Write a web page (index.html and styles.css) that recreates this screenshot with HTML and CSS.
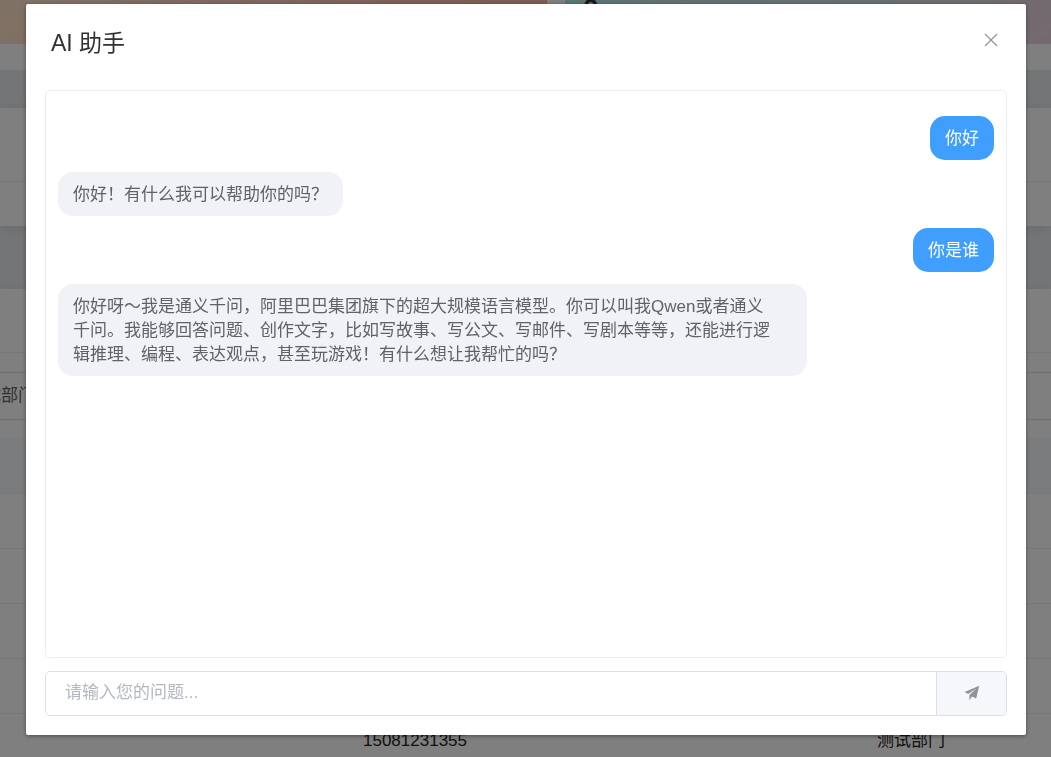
FILE: index.html
```
<!DOCTYPE html>
<html lang="zh-CN">
<head>
  <meta charset="UTF-8">
  <meta name="viewport" content="width=device-width, initial-scale=1.0">
  <title>AI 助手</title>
  <link rel="stylesheet" href="styles.css">
</head>
<body>
  <!-- page behind the dialog -->
  <main class="page">
    <section class="stats">
      <div class="stat stat-warm"></div>
      <div class="stat stat-cool"><strong>0</strong></div>
    </section>
    <section class="panel filter">
      <div class="filter-title"></div>
      <div class="filter-body"></div>
    </section>
    <section class="panel list">
      <div class="list-title"></div>
      <div class="dept"><span>测试部门</span></div>
      <table>
        <thead>
          <tr><th></th><th></th><th></th></tr>
        </thead>
        <tbody>
          <tr><td></td><td></td><td></td></tr>
          <tr><td></td><td></td><td></td></tr>
          <tr><td></td><td></td><td></td></tr>
          <tr><td></td><td></td><td></td></tr>
          <tr><td></td><td>15081231355</td><td>测试部门</td></tr>
        </tbody>
      </table>
    </section>
  </main>

  <div class="overlay">
    <div class="dialog" role="dialog" aria-labelledby="dialogTitle">
      <header class="dialog-header">
        <h1 id="dialogTitle">AI 助手</h1>
        <button class="close" type="button" aria-label="关闭">
          <svg viewBox="0 0 14 14" width="14" height="14"><path d="M1 1L13 13M13 1L1 13" fill="none" stroke="currentColor" stroke-width="1.2"/></svg>
        </button>
      </header>
      <div class="chat">
        <div class="message user">你好</div>
        <div class="message">你好！有什么我可以帮助你的吗？</div>
        <div class="message user">你是谁</div>
        <div class="message long">你好呀～我是通义千问，阿里巴巴集团旗下的超大规模语言模型。你可以叫我Qwen或者通义<br>千问。我能够回答问题、创作文字，比如写故事、写公文、写邮件、写剧本等等，还能进行逻<br>辑推理、编程、表达观点，甚至玩游戏！有什么想让我帮忙的吗？</div>
      </div>
      <form class="ask">
        <input type="text" placeholder="请输入您的问题..." aria-label="问题">
        <button type="button" aria-label="发送">
          <svg viewBox="0 0 16 16" width="16" height="16"><path d="M15.2 .8L.6 7.1L4.2 9.1L12.6 3.3L5.4 10V15.2L8 11.6L12.2 13.6Z" fill="currentColor"/></svg>
        </button>
      </form>
    </div>
  </div>
</body>
</html>
```
FILE: styles.css
```
* {
  box-sizing: border-box;
}
html, body {
  height: 100%;
}
body {
  margin: 0;
  overflow: hidden;
  background: #e9ebef;
  color: #303133;
  font-family: "Liberation Sans", "Noto Sans CJK SC", sans-serif;
  font-size: 17px;
  line-height: 24px;
}

/* page behind */
.page {
  display: flow-root;
}
.stats {
  display: grid;
  grid-template-columns: 547px 1fr;
  gap: 18px;
  margin-top: -100px;
  padding-bottom: 26px;
  background: #fff;
}
.stat {
  height: 144px;
  padding: 97px 18px 0;
}
.stat-warm {
  background: linear-gradient(135deg, #ffecd2, #fcb69f);
}
.stat-cool {
  background: linear-gradient(135deg, #a8edea, #ead3df);
}
.stat strong {
  font-size: 28px;
}
.panel {
  background: #fff;
  box-shadow: 0 2px 12px rgba(0, 0, 0, 0.1);
}
.filter {
  margin: 38px 0 63px;
}
.filter-title {
  height: 74px;
  border-bottom: 1px solid #ebeef5;
}
.filter-body {
  height: 44px;
}
.list-title {
  height: 64px;
  border-bottom: 1px solid #ebeef5;
}
.dept {
  height: 48px;
  margin-top: 19px;
  border: solid #dcdfe6;
  border-width: 1px 0;
  color: #606266;
  line-height: 46px;
}
.dept span {
  margin-left: -33px;
}
table {
  width: 100%;
  margin-top: 18px;
  border-collapse: collapse;
  table-layout: fixed;
}
th, td {
  height: 55px;
  padding: 0;
  border-bottom: 1px solid #ebeef5;
  color: #222;
  text-align: left;
}
th {
  background: #f5f7fa;
}
th:first-child {
  width: 363px;
}
th:last-child {
  width: 174px;
}

/* dialog */
.overlay {
  position: fixed;
  inset: 0;
  padding: 4px 25px 0 26px;
  background: rgba(0, 0, 0, 0.5);
}
.dialog {
  padding: 0 19px 19px;
  border-radius: 2px;
  background: #fff;
  box-shadow: 0 1px 4px rgba(0, 0, 0, 0.4);
}
.dialog-header {
  display: flex;
  justify-content: space-between;
  padding: 24px 9px 32px 6px;
}
h1 {
  margin: 0;
  font-size: 23px;
  font-weight: 400;
  line-height: 30px;
}
.close {
  height: 24px;
  padding: 0;
  border: 0;
  background: none;
  color: #909399;
}
.close svg, .ask svg {
  display: block;
}
.chat {
  display: flex;
  flex-direction: column;
  align-items: flex-start;
  gap: 12px;
  height: 75vh;
  padding: 25px 12px;
  overflow-y: auto;
  border: 1px solid #ebeef5;
  border-radius: 5px;
}
.message {
  max-width: 80%;
  padding: 11px 15px 9px;
  border-radius: 15px;
  background: #f0f2f5;
  color: #606266;
}
.message.user {
  align-self: flex-end;
  background: #409eff;
  color: #fff;
}
.message.long {
  width: 80%;
}
.ask {
  display: flex;
  height: 45px;
  margin-top: 13px;
  border: 1px solid #dcdfe6;
  border-radius: 5px;
  overflow: hidden;
}
.ask input {
  flex: 1;
  min-width: 0;
  padding: 0 19px;
  border: 0;
  outline: 0;
  font: inherit;
}
.ask input::placeholder {
  color: #b4b8c0;
}
.ask button {
  display: grid;
  place-items: center;
  width: 70px;
  padding: 0;
  border: 0;
  border-left: 1px solid #dcdfe6;
  background: #f5f7fa;
  color: #909399;
}
```
